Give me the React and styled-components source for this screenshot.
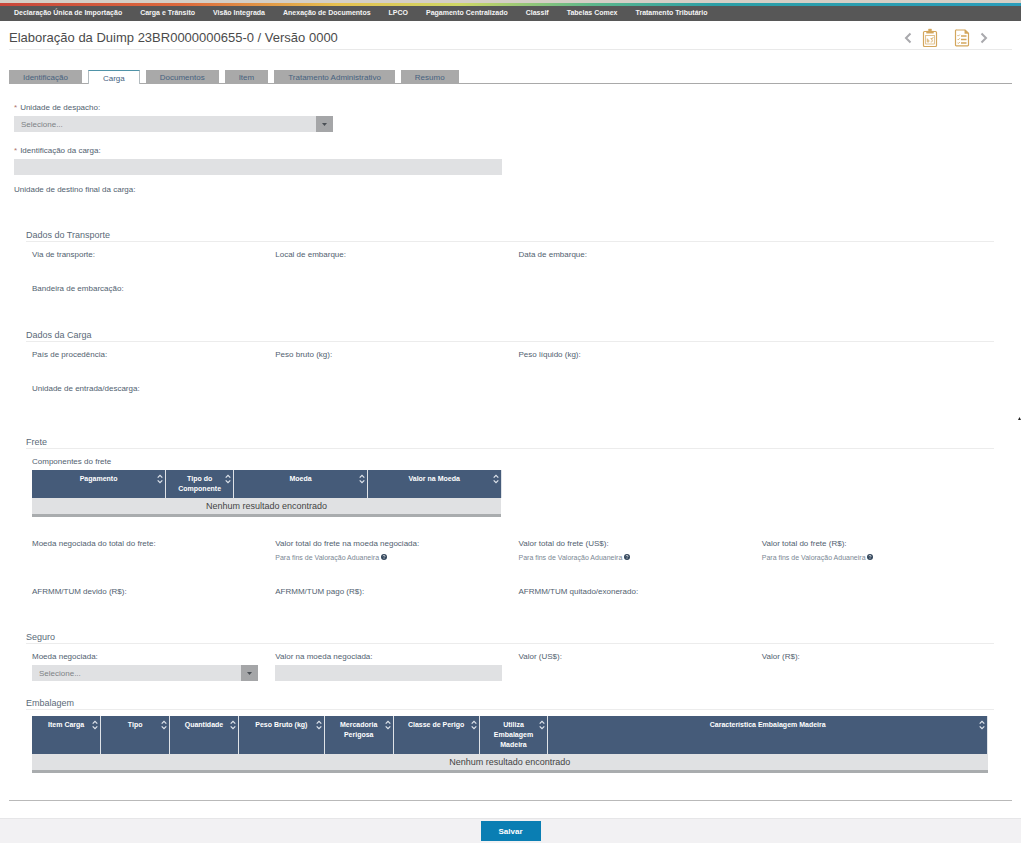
import React from 'react';
import styled, { createGlobalStyle } from 'styled-components';

const GlobalStyle = createGlobalStyle`
  * {
    box-sizing: border-box;
  }

  body {
    margin: 0;
    background: #fff;
    color: #51616f;
    font-family: "Liberation Sans", Arial, sans-serif;
    font-size: 8px;
    line-height: 10px;
  }
`;

const menu = [
  'Declaração Única de Importação',
  'Carga e Trânsito',
  'Visão Integrada',
  'Anexação de Documentos',
  'LPCO',
  'Pagamento Centralizado',
  'Classif',
  'Tabelas Comex',
  'Tratamento Tributário',
];

const tabs = ['Identificação', 'Carga', 'Documentos', 'Item', 'Tratamento Administrativo', 'Resumo'];

const freteColumns = [
  { label: 'Pagamento', width: '28.5%' },
  { label: 'Tipo do Componente', width: '14.5%' },
  { label: 'Moeda', width: '28.5%' },
  { label: 'Valor na Moeda', width: '28.5%' },
];

const embalagemColumns = [
  { label: 'Item Carga', width: '7.2%' },
  { label: 'Tipo', width: '7.2%' },
  { label: 'Quantidade', width: '7.2%' },
  { label: 'Peso Bruto (kg)', width: '9%' },
  { label: 'Mercadoria Perigosa', width: '7.2%' },
  { label: 'Classe de Perigo', width: '9%' },
  { label: 'Utiliza Embalagem Madeira', width: '7.2%' },
  { label: 'Característica Embalagem Madeira', width: '46%' },
];

const ChevronIcon = ({ right }) => (
  <svg width="8" height="12" viewBox="0 0 8 12" fill="none" stroke="#a9a9ad" strokeWidth="2">
    <path d={right ? 'M1.5 1.5 6 6 1.5 10.5' : 'M6.5 1.5 2 6l4.5 4.5'} />
  </svg>
);

const ClipboardIcon = () => (
  <svg width="16" height="20" viewBox="0 0 16 20" fill="none" stroke="#d3a65c">
    <rect x="1.5" y="3.500" width="13" height="15" rx="1" strokeWidth="1.200" />
    <path d="M4.500 5.200V3.200h2V1h3v2.200h2v2z" fill="#d3a65c" strokeWidth=".4" />
    <rect x="3.700" y="7.500" width="8.600" height="8.500" strokeWidth=".7" />
    <path d="M5.300 14v-3.500M5.300 12h1.500v2H5.300M8.500 10.500h2l-1 1.500c1.500 0 1.500 2-.8 2M11 9v1" strokeWidth=".8" />
  </svg>
);

const ChecklistIcon = () => (
  <svg width="16" height="20" viewBox="0 0 16 20" fill="none" stroke="#d3a65c">
    <path d="M2.500 2h8.700l3.300 3.300V17a.8.8 0 0 1-.8.8H2.300a.8.800 0 0 1-.8-.8V2.800a.8.800 0 0 1 1-.8z" strokeWidth="1.200" />
    <path d="M10.800 2v3.500h3.700z" fill="#d3a65c" strokeWidth=".5" />
    <path d="M3.500 7.300l.8.800 1.500-1.500M3.500 11l.8.800 1.500-1.500M3.500 14.700l.8.800 1.500-1.500" strokeWidth=".9" />
    <path d="M7 8h5.500M7 11.500h5.500M7 15h5.500" strokeWidth="1.300" />
  </svg>
);

const SortIcon = () => (
  <svg width="6" height="10" viewBox="0 0 6 10" fill="none" stroke="#dfe5ec" strokeWidth="1.200">
    <path d="M.7 3.700 3 1.300l2.300 2.400M.7 6.300 3 8.700l2.300-2.400" />
  </svg>
);

const HelpIcon = () => (
  <svg width="6" height="6" viewBox="0 0 6 6">
    <circle cx="3" cy="3" r="3" fill="#34475c" />
    <path d="M2 2.300c0-1.300 2-1.300 2 0 0 .7-1 .6-1 1.300M3 4.300v.7" fill="none" stroke="#fff" strokeWidth=".7" />
  </svg>
);

const Field = ({ id, label, required, help, children }) => (
  <FieldBox>
    <Label as={children ? 'label' : 'span'} htmlFor={children ? id : undefined}>
      {required && <Required>*</Required>}
      {label}
    </Label>
    {help && (
      <Help>
        Para fins de Valoração Aduaneira <HelpIcon />
      </Help>
    )}
    {children}
  </FieldBox>
);

const Dropdown = ({ id }) => (
  <SelectBox>
    <Select id={id}>
      <option>Selecione...</option>
    </Select>
    <SelectArrow>
      <svg width="5" height="3" viewBox="0 0 5 3">
        <path d="M0 0h5L2.500 3z" fill="#4a4f55" />
      </svg>
    </SelectArrow>
  </SelectBox>
);

const DataTable = ({ columns, label }) => (
  <Table aria-label={label}>
    <thead>
      <tr>
        {columns.map(column => (
          <Th key={column.label} $width={column.width}>
            <ThContent>
              <ThText>{column.label}</ThText>
              <SortIcon />
            </ThContent>
          </Th>
        ))}
      </tr>
    </thead>
    <tbody>
      <tr>
        <EmptyCell colSpan={columns.length}>Nenhum resultado encontrado</EmptyCell>
      </tr>
    </tbody>
  </Table>
);

const App = () => (
  <Page>
    <GlobalStyle />
    <ColorStrip />
    <Menu>
      {menu.map(item => (
        <MenuLink key={item} href="#">
          {item}
        </MenuLink>
      ))}
    </Menu>

    <Content>
      <Header>
        <Title>Elaboração da Duimp 23BR0000000655-0 / Versão 0000</Title>
        <Actions>
          <IconButton aria-label="Anterior">
            <ChevronIcon />
          </IconButton>
          <IconButton aria-label="Diagnóstico">
            <ClipboardIcon />
          </IconButton>
          <IconButton aria-label="Resumo da Duimp" $spaced>
            <ChecklistIcon />
          </IconButton>
          <IconButton aria-label="Próximo">
            <ChevronIcon right />
          </IconButton>
        </Actions>
      </Header>

      <Tabs role="tablist">
        {tabs.map(tab => (
          <Tab key={tab} role="tab" aria-selected={tab === 'Carga'} $active={tab === 'Carga'}>
            {tab}
          </Tab>
        ))}
      </Tabs>

      <Form>
        <Row $columns={3} $height={43}>
          <Field id="unidade-despacho" label="Unidade de despacho:" required>
            <Dropdown id="unidade-despacho" />
          </Field>
        </Row>
        <Row $columns={2} $height={39}>
          <Field id="identificacao-carga" label="Identificação da carga:" required>
            <Input id="identificacao-carga" />
          </Field>
        </Row>
        <Row $columns={2} $height={44}>
          <Field label="Unidade de destino final da carga:" />
        </Row>

        <Section $space={11}>
          <SectionTitle>Dados do Transporte</SectionTitle>
          <SectionBody>
            <Row $height={34}>
              <Field label="Via de transporte:" />
              <Field label="Local de embarque:" />
              <Field label="Data de embarque:" />
            </Row>
            <Row $height={34}>
              <Field label="Bandeira de embarcação:" />
            </Row>
          </SectionBody>
        </Section>

        <Section $space={18}>
          <SectionTitle>Dados da Carga</SectionTitle>
          <SectionBody>
            <Row $height={34}>
              <Field label="País de procedência:" />
              <Field label="Peso bruto (kg):" />
              <Field label="Peso líquido (kg):" />
            </Row>
            <Row $height={34}>
              <Field label="Unidade de entrada/descarga:" />
            </Row>
          </SectionBody>
        </Section>

        <Section $space={10}>
          <SectionTitle>Frete</SectionTitle>
          <SectionBody>
            <Row $columns={2} $height={82}>
              <FieldBox>
                <Label as="span">Componentes do frete</Label>
                <DataTable columns={freteColumns} label="Componentes do frete" />
              </FieldBox>
            </Row>
            <Row $height={48}>
              <Field label="Moeda negociada do total do frete:" />
              <Field label="Valor total do frete na moeda negociada:" help />
              <Field label="Valor total do frete (US$):" help />
              <Field label="Valor total do frete (R$):" help />
            </Row>
            <Row $height={34}>
              <Field label="AFRMM/TUM devido (R$):" />
              <Field label="AFRMM/TUM pago (R$):" />
              <Field label="AFRMM/TUM quitado/exonerado:" />
            </Row>
          </SectionBody>
        </Section>

        <Section $space={15}>
          <SectionTitle>Seguro</SectionTitle>
          <SectionBody>
            <Row $height={30}>
              <Field id="moeda-negociada" label="Moeda negociada:">
                <Dropdown id="moeda-negociada" />
              </Field>
              <Field id="valor-negociado" label="Valor na moeda negociada:">
                <Input id="valor-negociado" />
              </Field>
              <Field label="Valor (US$):" />
              <Field label="Valor (R$):" />
            </Row>
          </SectionBody>
        </Section>

        <Section $space={27}>
          <SectionTitle>Embalagem</SectionTitle>
          <SectionBody $tight>
            <DataTable columns={embalagemColumns} label="Embalagem" />
          </SectionBody>
        </Section>
      </Form>
    </Content>

    <Footer>
      <SaveButton>Salvar</SaveButton>
    </Footer>

    <EdgeMark width="3" height="3" viewBox="0 0 3 3" aria-hidden="true">
      <path d="M1.500 0 3 3H0z" fill="#222" />
    </EdgeMark>
  </Page>
);

const Page = styled.div`
  position: relative;
  margin-right: 3px;
`;

const EdgeMark = styled.svg`
  position: absolute;
  top: 417px;
  right: 0;
`;

const ColorStrip = styled.div`
  height: 6px;
  border-top: 3px solid #d5cfc6;
  background: linear-gradient(to right, #c8463a, #dd6a3c 18%, #e6c04f 33%, #cfd765 45%, #5db78b 58%, #2b9fa6 70%, #2a9dbb);
`;

const Menu = styled.nav`
  display: flex;
  flex-wrap: wrap;
  gap: 4px 18px;
  padding: 2px 14px 3px;
  background: #575757;
`;

const MenuLink = styled.a`
  color: #f4f4f4;
  font-size: 7px;
  font-weight: bold;
  text-decoration: none;
`;

const Content = styled.main`
  padding: 0 9px;
`;

const Header = styled.header`
  display: flex;
  align-items: center;
  justify-content: space-between;
  height: 29px;
  padding-top: 5px;
  border-bottom: 1px solid #e9e9e9;
`;

const Title = styled.h1`
  margin: 0;
  color: #4b4b4b;
  font-size: 13px;
  font-weight: normal;
  line-height: 16px;
`;

const Actions = styled.div`
  display: flex;
  align-items: center;
  gap: 10px;
  padding-right: 24px;
`;

const IconButton = styled.button`
  display: flex;
  padding: 0;
  margin-left: ${props => (props.$spaced ? '6px' : '0')};
  border: 0;
  background: none;
`;

const Tabs = styled.div`
  display: flex;
  align-items: flex-end;
  gap: 6px;
  margin-top: 20px;
  border-bottom: 1px solid #a9a9a9;
`;

const Tab = styled.button`
  height: ${props => (props.$active ? '14px' : '13px')};
  margin-bottom: ${props => (props.$active ? '-1px' : '0')};
  padding: 2px 14px 0;
  border: solid #b4bcc0;
  border-width: ${props => (props.$active ? '1px 1px 0' : '0')};
  border-top-color: #4f93a8;
  background: ${props => (props.$active ? '#fff' : '#a9a9a9')};
  color: #46627f;
  font-family: inherit;
  font-size: 8px;
  line-height: 10px;
`;

const Form = styled.form`
  padding: 19px 6px 0 5px;
  border-bottom: 1px solid #b9b9b9;
`;

const Row = styled.div`
  display: grid;
  grid-template-columns: repeat(${props => props.$columns || 4}, minmax(0, 1fr));
  align-items: start;
  column-gap: 17px;
  min-height: ${props => props.$height}px;
`;

const FieldBox = styled.div`
  display: flex;
  flex-direction: column;
  gap: 3px;
`;

const Label = styled.label`
  font-size: 8px;
  line-height: 10px;
`;

const Required = styled.span`
  margin-right: 3px;
  color: #b0766c;
`;

const Help = styled.small`
  color: #7b8794;
  font-size: 7px;
  line-height: 12px;
`;

const SelectBox = styled.div`
  position: relative;
  display: flex;
`;

const Select = styled.select`
  flex: 1;
  height: 16px;
  padding: 0 24px 0 7px;
  border: 0;
  border-radius: 0;
  appearance: none;
  background: #e0e1e3;
  color: #7d8185;
  font-family: inherit;
  font-size: 8px;
`;

const SelectArrow = styled.span`
  position: absolute;
  top: 0;
  right: 0;
  display: flex;
  align-items: center;
  justify-content: center;
  width: 17px;
  height: 16px;
  background: #a5a6a8;
  pointer-events: none;
`;

const Input = styled.input`
  width: 100%;
  height: 16px;
  padding: 0 7px;
  border: 0;
  background: #e0e1e3;
  color: #51616f;
  font-family: inherit;
  font-size: 8px;
`;

const Section = styled.section`
  margin: 0 12px ${props => props.$space}px;
`;

const SectionTitle = styled.h2`
  margin: 0;
  border-bottom: 1px solid #ececec;
  color: #5a6a78;
  font-size: 9px;
  font-weight: normal;
  line-height: 12px;
`;

const SectionBody = styled.div`
  padding: ${props => (props.$tight ? '6px' : '8px')} 6px 0;
`;

const Table = styled.table`
  width: 100%;
  border-collapse: collapse;
  border-bottom: 3px solid #a9acae;
  table-layout: fixed;
`;

const Th = styled.th`
  width: ${props => props.$width};
  padding: 4px 2px 4px 8px;
  border-right: 1px solid #dfe3e8;
  background: #455b79;
  color: #fff;
  font-size: 7px;
  line-height: 10px;
  vertical-align: top;
`;

const ThContent = styled.div`
  display: flex;

  svg {
    flex: none;
  }
`;

const ThText = styled.span`
  flex: 1;
  text-align: center;
`;

const EmptyCell = styled.td`
  padding: 2px 0;
  background: #e0e1e3;
  color: #444;
  font-size: 9px;
  line-height: 12px;
  text-align: center;
`;

const Footer = styled.footer`
  display: flex;
  justify-content: center;
  margin-top: 17px;
  padding: 2px 0 3px;
  border-top: 1px solid #e6e6e8;
  background: #f2f1f3;
`;

const SaveButton = styled.button`
  width: 60px;
  height: 20px;
  padding: 0;
  border: 0;
  background: #0a7eb3;
  color: #fff;
  font-family: inherit;
  font-size: 8px;
  font-weight: bold;
`;

export default App;
